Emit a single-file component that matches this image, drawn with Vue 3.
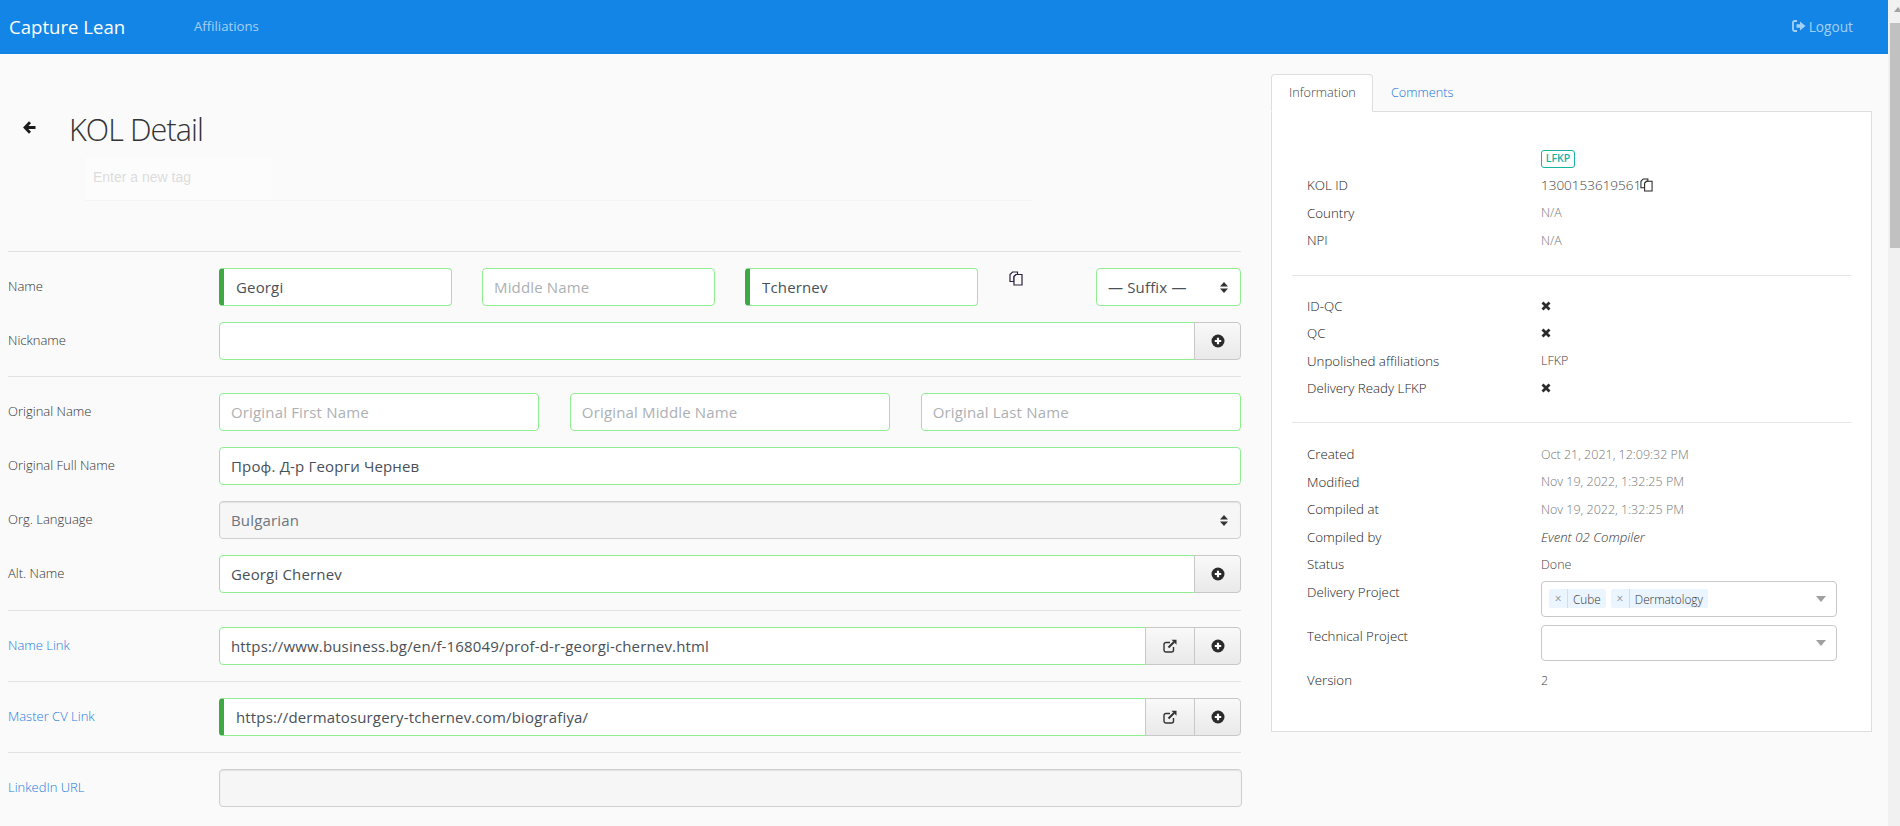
<script setup>
const idRows = [
  { label: 'Country', value: 'N/A', muted: true },
  { label: 'NPI', value: 'N/A', muted: true },
]
const metaRows = [
  { label: 'Created', value: 'Oct 21, 2021, 12:09:32 PM', muted: true },
  { label: 'Modified', value: 'Nov 19, 2022, 1:32:25 PM', muted: true },
  { label: 'Compiled at', value: 'Nov 19, 2022, 1:32:25 PM', muted: true },
  { label: 'Compiled by', value: 'Event 02 Compiler', italic: true },
  { label: 'Status', value: 'Done' },
]
</script>

<template>
  <div class="app">
    <div class="main">
      <nav class="navbar">
        <span class="brand">Capture Lean</span>
        <a class="nav-link">Affiliations</a>
        <a class="nav-link logout">
          <svg class="logout-icon" viewBox="0 0 14 12" width="14" height="12">
            <path d="M5 1H2.500A1.500 1.500 0 0 0 1 2.500v7A1.500 1.500 0 0 0 2.500 11H5" fill="none" stroke="currentColor" stroke-width="1.800" />
            <path d="M4.500 4.300H8V1.500L13.500 6 8 10.500V7.700H4.500z" fill="currentColor" />
          </svg>
          Logout
        </a>
      </nav>

      <div class="content">
        <section class="left">
          <header class="page-head">
            <div class="title-row">
              <svg class="back" viewBox="0 0 13 13" width="13" height="13">
                <path d="M7 1.200 2 6.500 7 11.800M3 6.500H12.500" fill="none" stroke="#1b1b1b" stroke-width="2.800" />
              </svg>
              <h1>KOL Detail</h1>
            </div>
            <div class="tag-input">Enter a new tag</div>
          </header>

          <hr />

          <div class="row">
            <label>Name</label>
            <div class="controls name-controls">
              <input class="field accent" value="Georgi" />
              <input class="field" placeholder="Middle Name" />
              <input class="field accent" value="Tchernev" />
              <span class="copy-slot">
                <svg viewBox="0 0 14 15" width="14" height="15">
                  <path d="M1 3.500V10.500H5V5.500L7 3.500H8.500V1H3.500z" fill="none" stroke="#2c2440" stroke-width="1.200" />
                  <path d="M5 5.500V14H13V3.500H7z" fill="#fafafa" stroke="#2c2440" stroke-width="1.200" />
                </svg>
              </span>
              <div class="select-wrap suffix">
                <select class="field select"><option>— Suffix —</option></select>
                <svg class="updown" viewBox="0 0 8 11" width="8" height="11"><path d="M4 0 8 4.500H0zM0 6.500h8L4 11z" fill="#333" /></svg>
              </div>
            </div>
          </div>
          <div class="row">
            <label>Nickname</label>
            <div class="controls group">
              <input class="field" />
              <button class="addon" aria-label="Add">
                <svg viewBox="0 0 14 14" width="14" height="14"><circle cx="7" cy="7" r="6.500" fill="#2b2b2b" /><path d="M7 3.800v6.400M3.800 7h6.400" stroke="#fff" stroke-width="2.200" /></svg>
              </button>
            </div>
          </div>

          <hr />

          <div class="row">
            <label>Original Name</label>
            <div class="controls thirds">
              <input class="field" placeholder="Original First Name" />
              <input class="field" placeholder="Original Middle Name" />
              <input class="field" placeholder="Original Last Name" />
            </div>
          </div>
          <div class="row">
            <label>Original Full Name</label>
            <div class="controls"><input class="field" value="Проф. Д-р Георги Чернев" /></div>
          </div>
          <div class="row">
            <label>Org. Language</label>
            <div class="controls select-wrap">
              <select class="field select" disabled><option>Bulgarian</option></select>
              <svg class="updown" viewBox="0 0 8 11" width="8" height="11"><path d="M4 0 8 4.500H0zM0 6.500h8L4 11z" fill="#333" /></svg>
            </div>
          </div>
          <div class="row">
            <label>Alt. Name</label>
            <div class="controls group">
              <input class="field" value="Georgi Chernev" />
              <button class="addon" aria-label="Add">
                <svg viewBox="0 0 14 14" width="14" height="14"><circle cx="7" cy="7" r="6.500" fill="#2b2b2b" /><path d="M7 3.800v6.400M3.800 7h6.400" stroke="#fff" stroke-width="2.200" /></svg>
              </button>
            </div>
          </div>

          <hr class="links-start" />

          <div class="row">
            <label class="link">Name Link</label>
            <div class="controls group">
              <input class="field" value="https://www.business.bg/en/f-168049/prof-d-r-georgi-chernev.html" />
              <button class="addon" aria-label="Open">
                <svg viewBox="0 0 14 14" width="14" height="14"><path d="M10.500 8v3a2 2 0 0 1-2 2H3a2 2 0 0 1-2-2V5.500a2 2 0 0 1 2-2h4" fill="none" stroke="#333" stroke-width="1.400" /><path d="M5.500 8.500 11 3" stroke="#333" stroke-width="2" /><path d="M8.500 .8H13.500V5.800z" fill="#333" /></svg>
              </button>
              <button class="addon" aria-label="Add">
                <svg viewBox="0 0 14 14" width="14" height="14"><circle cx="7" cy="7" r="6.500" fill="#2b2b2b" /><path d="M7 3.800v6.400M3.800 7h6.400" stroke="#fff" stroke-width="2.200" /></svg>
              </button>
            </div>
          </div>

          <hr />

          <div class="row">
            <label class="link">Master CV Link</label>
            <div class="controls group">
              <input class="field accent" value="https://dermatosurgery-tchernev.com/biografiya/" />
              <button class="addon" aria-label="Open">
                <svg viewBox="0 0 14 14" width="14" height="14"><path d="M10.500 8v3a2 2 0 0 1-2 2H3a2 2 0 0 1-2-2V5.500a2 2 0 0 1 2-2h4" fill="none" stroke="#333" stroke-width="1.400" /><path d="M5.500 8.500 11 3" stroke="#333" stroke-width="2" /><path d="M8.500 .8H13.500V5.800z" fill="#333" /></svg>
              </button>
              <button class="addon" aria-label="Add">
                <svg viewBox="0 0 14 14" width="14" height="14"><circle cx="7" cy="7" r="6.500" fill="#2b2b2b" /><path d="M7 3.800v6.400M3.800 7h6.400" stroke="#fff" stroke-width="2.200" /></svg>
              </button>
            </div>
          </div>

          <hr />

          <div class="row">
            <label class="link">LinkedIn URL</label>
            <div class="controls wide"><input class="field" disabled /></div>
          </div>
        </section>

        <aside class="right">
          <div class="tabs">
            <span class="tab active">Information</span>
            <span class="tab">Comments</span>
          </div>
          <div class="panel">
            <div class="info">
              <div class="badge-row"><span class="badge">LFKP</span></div>
              <div class="info-row kol-id">
                <span>KOL ID</span>
                <span class="value id">1300153619561<svg viewBox="0 0 14 15" width="13" height="14">
                    <path d="M1 3.500V10.500H5V5.500L7 3.500H8.500V1H3.500z" fill="none" stroke="#222" stroke-width="1.100" />
                    <path d="M5 5.500V14H13V3.500H7z" fill="#fff" stroke="#222" stroke-width="1.100" />
                  </svg></span>
              </div>
              <div v-for="r in idRows" :key="r.label" class="info-row">
                <span>{{ r.label }}</span>
                <span class="value" :class="{ muted: r.muted }">{{ r.value }}</span>
              </div>
            </div>

            <hr class="panel-hr" />

            <div class="info">
              <div class="info-row"><span>ID-QC</span><span class="value"><svg class="cross" viewBox="0 0 10 10" width="10" height="10"><path d="M1.500 1.500l7 7M8.500 1.500l-7 7" stroke="#2b2b2b" stroke-width="2.800" /></svg></span></div>
              <div class="info-row"><span>QC</span><span class="value"><svg class="cross" viewBox="0 0 10 10" width="10" height="10"><path d="M1.500 1.500l7 7M8.500 1.500l-7 7" stroke="#2b2b2b" stroke-width="2.800" /></svg></span></div>
              <div class="info-row"><span>Unpolished affiliations</span><span class="value">LFKP</span></div>
              <div class="info-row"><span>Delivery Ready LFKP</span><span class="value"><svg class="cross" viewBox="0 0 10 10" width="10" height="10"><path d="M1.500 1.500l7 7M8.500 1.500l-7 7" stroke="#2b2b2b" stroke-width="2.800" /></svg></span></div>
            </div>

            <hr class="panel-hr meta-start" />

            <div class="info">
              <div v-for="r in metaRows" :key="r.label" class="info-row">
                <span>{{ r.label }}</span>
                <span class="value" :class="{ muted: r.muted, italic: r.italic }">{{ r.value }}</span>
              </div>
              <div class="info-row select-row">
                <span>Delivery Project</span>
                <div class="multi">
                  <span class="chip"><i>×</i><b>Cube</b></span>
                  <span class="chip"><i>×</i><b>Dermatology</b></span>
                  <span class="caret"></span>
                </div>
              </div>
              <div class="info-row select-row">
                <span>Technical Project</span>
                <div class="multi"><span class="caret"></span></div>
              </div>
              <div class="info-row"><span>Version</span><span class="value">2</span></div>
            </div>
          </div>
        </aside>
      </div>
    </div>

    <div class="scrollbar" aria-hidden="true">
      <span class="scroll-arrow"></span>
      <span class="scroll-thumb"></span>
    </div>
  </div>
</template>

<style>
html, body { margin: 0; overflow: hidden; background: #fafafa; }
</style>

<style scoped>
.app {
  display: flex;
  height: 826px;
  overflow: hidden;
  font-family: "Open Sans", "Noto Sans", sans-serif;
  font-size: 13px;
  color: #333;
  background: #fafafa;
}
.main { flex: 1; min-width: 0; }
.navbar {
  display: flex;
  align-items: center;
  height: 54px;
  box-sizing: border-box;
  padding: 0 35px 0 9px;
  background: #1385e6;
}
.brand { width: 185px; font-size: 18.600px; color: #fff; margin-top: -1px; }
.nav-link { font-size: 13.200px; color: rgba(255, 255, 255, 0.62); margin-top: -2px; }
.logout { margin-left: auto; display: flex; align-items: center; gap: 3px; font-size: 13.700px; }
.logout-icon { margin-left: -3px; }
.content { display: flex; align-items: flex-start; padding-left: 8px; }
.left { width: 1233px; flex: none; }
.page-head { height: 197px; box-sizing: border-box; padding-top: 56px; }
.title-row { display: flex; align-items: center; height: 38px; }
.back { margin-left: 15px; margin-right: 33px; margin-top: -4px; }
h1 { margin: 0; font-size: 30.500px; font-weight: 300; letter-spacing: -0.900px; line-height: 38px; color: #333; }
.tag-input {
  margin: 10px 208px 0 77px;
  height: 43px;
  box-sizing: border-box;
  padding: 0 8px;
  line-height: 39px;
  font-family: "Liberation Sans", Arial, sans-serif;
  font-size: 14px;
  color: #dcdcdc;
  background: linear-gradient(90deg, #fcfcfc 186px, #fafafa 186px);
  border-bottom: 1px solid #f3f3f3;
}
hr { margin: 0 0 16px; border: 0; border-top: 1px solid #e2e2e2; }
.left > hr { margin-top: 16px; }
.left > hr.links-start { margin-top: 17px; }
.page-head + hr { margin-top: 0; }
.row { display: flex; align-items: center; }
.row + .row { margin-top: 16px; }
.row > label { width: 211px; flex: none; font-size: 13px; font-weight: 300; margin-top: -3px; color: #333; }
.row > label.link { color: #1c7ce0; }
.controls { flex: 1; min-width: 0; }
.field {
  display: block;
  width: 100%;
  height: 38px;
  box-sizing: border-box;
  padding: 0 11px;
  font-family: inherit;
  font-size: 15px;
  letter-spacing: 0.160px;
  color: #495057;
  background: #fff;
  border: 1px solid #90ee90;
  border-radius: 4px;
  outline: none;
}
.field::placeholder { color: #adb0b3; opacity: 1; }
.field.accent { padding-left: 12px; border-left: 5px solid #3ea845; }
.field:disabled { background: #f6f6f6; border-color: #cfcfcf; box-shadow: inset 0 1px 1px rgba(0, 0, 0, 0.08); }
.select { appearance: none; padding-left: 11px; }
.select:disabled { color: #6c757d; opacity: 1; }
.name-controls { display: flex; align-items: flex-start; }
.name-controls > .field { width: 233px; flex: none; }
.name-controls > .field + .field { margin-left: 30px; }
.copy-slot { width: 118px; flex: none; box-sizing: border-box; padding: 3px 0 0 31px; line-height: 0; }
.select-wrap { position: relative; }
.suffix { width: 145px; flex: none; }
.updown { position: absolute; right: 13px; top: 14px; }
.group { display: flex; }
.group .field { flex: 1; min-width: 0; width: auto; border-top-right-radius: 0; border-bottom-right-radius: 0; }
.addon {
  width: 50px;
  height: 38px;
  flex: none;
  padding: 0;
  margin-left: -1px;
  display: flex;
  align-items: center;
  justify-content: center;
  background: linear-gradient(#f9f9f9, #e9e9e9);
  border: 1px solid #c8c8c8;
}
.addon:last-child { width: 47px; border-radius: 0 4px 4px 0; }
.thirds { display: grid; grid-template-columns: repeat(3, 1fr); column-gap: 30.500px; }
.wide { margin-right: -1px; }

.right { width: 601px; margin-left: 30px; margin-top: 20px; flex: none; }
.tabs { display: flex; height: 37px; position: relative; z-index: 1; }
.tab {
  box-sizing: border-box;
  height: 38px;
  padding: 0 17px;
  line-height: 35px;
  font-size: 12.700px;
  font-weight: 300;
  color: #1273d8;
  border: 1px solid transparent;
}
.tab.active {
  width: 102px;
  color: #444;
  padding-right: 0;
  background: #fff;
  border-color: #dedede #dedede #fff;
  border-radius: 4px 4px 0 0;
}
.panel {
  height: 621px;
  box-sizing: border-box;
  padding: 37px 20px 0;
  background: #fff;
  border: 1px solid #dedede;
}
.info { padding-left: 15px; font-size: 12.500px; color: #333; }
.badge-row { padding-left: 234px; height: 23.500px; }
.badge {
  display: inline-block;
  width: 34px;
  height: 18px;
  box-sizing: border-box;
  text-align: center;
  font-size: 10.500px;
  font-weight: 600;
  line-height: 15px;
  color: #17b3a3;
  border: 1px solid #17b3a3;
  border-radius: 3px;
}
.info-row { display: grid; grid-template-columns: 234px 1fr; align-items: center; height: 27.500px; font-weight: 300; }
.info-row > span:first-child { font-size: 13.300px; font-weight: 300; color: #222; }
.value { color: #444; }
.value.id { display: flex; align-items: center; font-size: 13.500px; }
.value.id svg { margin-left: -1px; }
.kol-id { margin-top: -1px; }
.muted { color: #777; }
.italic { font-size: 13.200px; font-style: italic; color: #333; }
.cross { display: block; }
.panel-hr { margin: 21px 0 16px; border-top-color: #e6e6e6; }
.panel-hr.meta-start { margin: 20px 0 17.500px; }
.select-row { height: 44px; align-items: flex-start; }
.info-row:not(.select-row) + .select-row { margin-top: 0.500px; }
.select-row > span { margin-top: 4px; }
.multi {
  display: flex;
  align-items: center;
  gap: 5px;
  position: relative;
  width: 296px;
  height: 36px;
  margin-top: 2px;
  box-sizing: border-box;
  padding-left: 7px;
  background: #fff;
  border: 1px solid #c8c8c8;
  border-radius: 4px;
}
.chip {
  display: flex;
  align-items: center;
  height: 19px;
  background: #ebf5ff;
  border-radius: 2px;
  font-size: 11.800px;
  color: #333;
}
.chip i { width: 18px; text-align: center; font-style: normal; font-weight: 300; color: #666; border-right: 1px solid #c2e0ff; line-height: 19px; }
.chip b { font-weight: 300; padding: 0 5px 0 5px; }
.caret {
  position: absolute;
  right: 10px;
  top: 14px;
  border: 5px solid transparent;
  border-top: 6px solid #a0a0a0;
  border-bottom: 0;
}

.scrollbar { width: 12px; flex: none; position: relative; background: #f1f1f1; }
.scroll-arrow {
  position: absolute;
  left: 6px;
  top: 7px;
  border: 4px solid transparent;
  border-bottom: 5px solid #a3a3a3;
  border-top: 0;
}
.scroll-thumb { position: absolute; left: 2px; right: 0; top: 23px; height: 225px; background: #c1c1c1; }
</style>
